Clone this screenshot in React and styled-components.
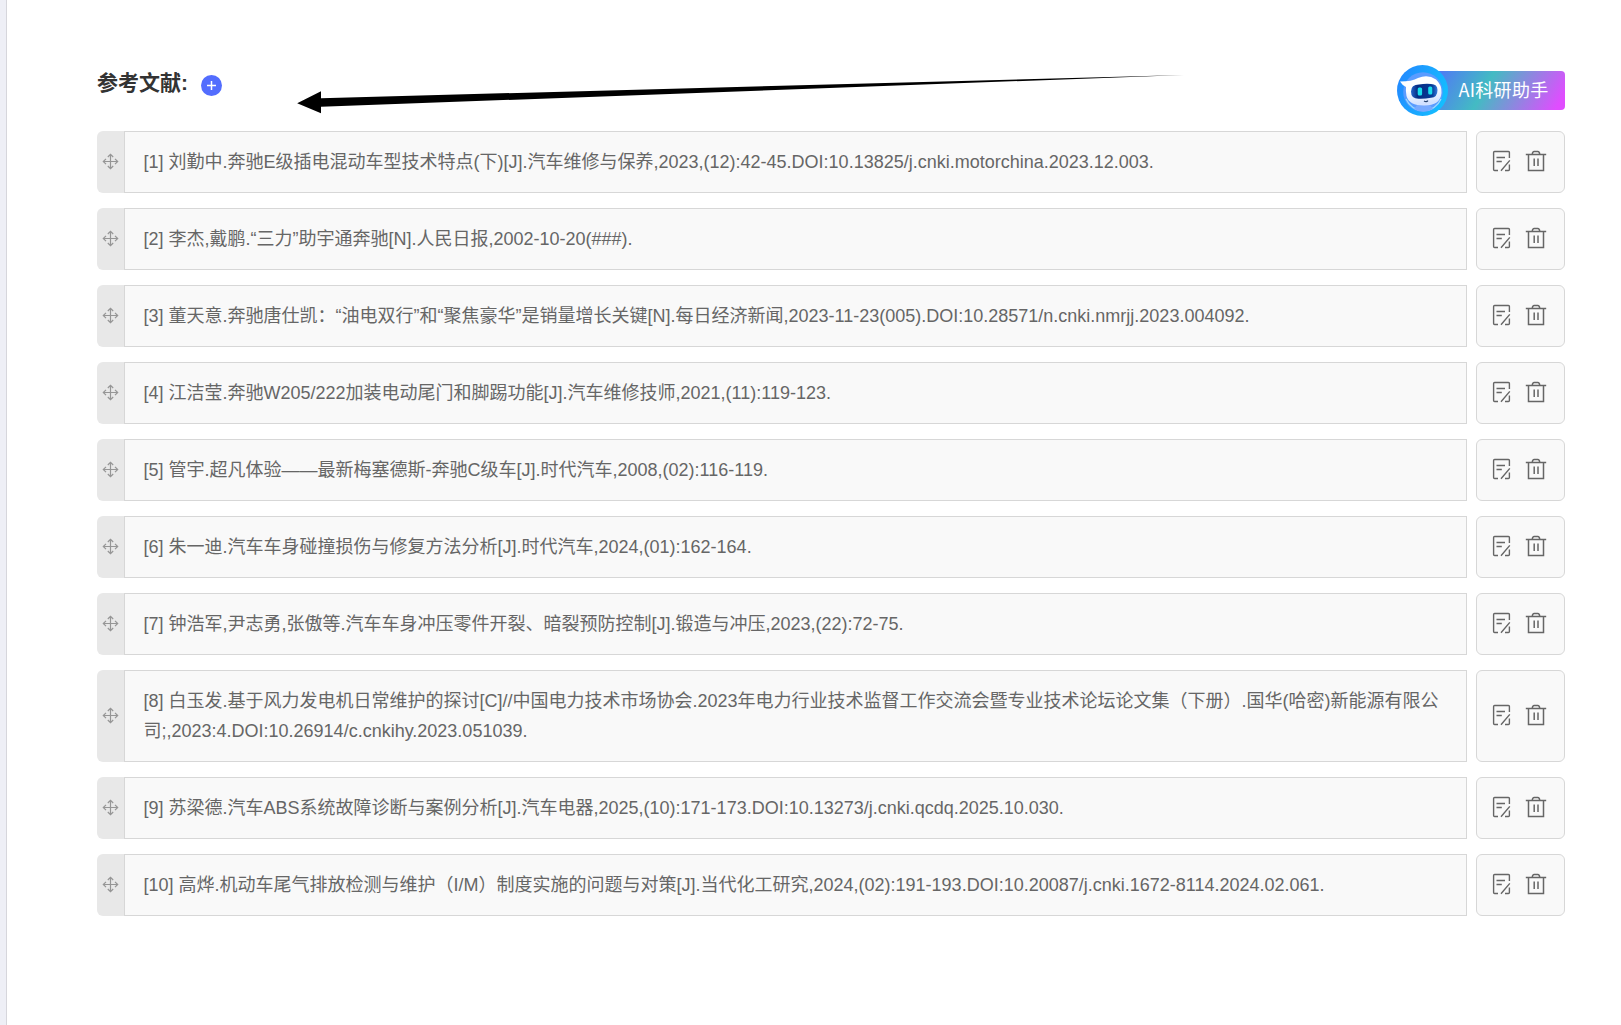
import React from 'react'
import styled, { createGlobalStyle } from 'styled-components'

const GlobalStyle = createGlobalStyle`
    * {
        box-sizing: border-box;
    }

    body {
        margin: 0;
        background: #FFFFFF;
        font-family: "Liberation Sans", "Noto Sans CJK SC", sans-serif;
    }
`

const Page = styled.div`
    position: relative;
    min-height: 1025px;
    display: flex;
`

const SideStrip = styled.div`
    width: 7px;
    flex-shrink: 0;
    background: #EEEFF6;
    border-right: 1px solid #D6D6DC;
`

const Content = styled.main`
    width: 1558px;
    padding: 65px 0px 0px 90px;
`

const HeaderRow = styled.div`
    height: 66px;
    display: flex;
    justify-content: space-between;
    align-items: flex-start;
`

const TitleContainer = styled.div`
    display: flex;
    align-items: center;
    padding: 3px 0px 0px 0px;

    & > h3 {
        margin: 0px;
        font-weight: bold;
        font-size: 21px;
        line-height: 30px;
        color: #333333;
    }
`

const AddButton = styled.button`
    width: 21px;
    height: 21px;
    margin: 5px 0px 0px 13px;
    padding: 0px;
    display: flex;
    justify-content: center;
    align-items: center;
    border: none;
    border-radius: 50%;
    background: #536DFE;
`

const AssistantButton = styled.div`
    display: flex;
    align-items: center;
    height: 51px;
`

const AssistantLabel = styled.div`
    width: 137px;
    height: 39px;
    margin: 0px 0px 0px -20px;
    padding: 0px 0px 0px 30.5px;
    border-radius: 0px 4px 4px 0px;
    background: linear-gradient(120deg, #536DFE 0%, #43BBC3 42%, #E04DFF 94%);
    font-family: "Noto Sans CJK SC", sans-serif;
    font-weight: 400;
    font-size: 18px;
    line-height: 37px;
    letter-spacing: 0.3px;
    white-space: nowrap;
    color: #FFFFFF;
`

const RobotSvg = styled.svg`
    position: relative;
    z-index: 1;
    display: block;
    width: 51px;
    height: 51px;
`

const ReferenceList = styled.div`
    display: flex;
    flex-direction: column;
    gap: 15px;
`

const ReferenceRow = styled.div`
    display: flex;
    align-items: stretch;
`

const DragHandle = styled.div`
    width: 27px;
    flex-shrink: 0;
    display: flex;
    justify-content: center;
    align-items: center;
    padding: 0px 0px 1px 0px;
    border-radius: 6px 0px 0px 6px;
    background: #E8E8E8;
`

const ReferenceText = styled.div`
    width: 1343px;
    padding: 15px 18px 15px 18.5px;
    border: 1px solid #D7D7D7;
    background: #F9F9F9;
    font-size: 18px;
    line-height: 30px;
    color: #666666;
`

const Actions = styled.div`
    width: 89px;
    margin: 0px 0px 0px 9px;
    display: flex;
    align-items: center;
    gap: 13px;
    padding: 0px 0px 2px 15px;
    border: 1px solid #D7D7D7;
    border-radius: 6px;
    background: #F9F9F9;
`

const Arrow = styled.svg`
    position: absolute;
    top: 70px;
    left: 290px;
`

const references = [
    '刘勤中.奔驰E级插电混动车型技术特点(下)[J].汽车维修与保养,2023,(12):42-45.DOI:10.13825/j.cnki.motorchina.2023.12.003.',
    '李杰,戴鹏.“三力”助宇通奔驰[N].人民日报,2002-10-20(###).',
    '董天意.奔驰唐仕凯：“油电双行”和“聚焦豪华”是销量增长关键[N].每日经济新闻,2023-11-23(005).DOI:10.28571/n.cnki.nmrjj.2023.004092.',
    '江洁莹.奔驰W205/222加装电动尾门和脚踢功能[J].汽车维修技师,2021,(11):119-123.',
    '管宇.超凡体验——最新梅塞德斯-奔驰C级车[J].时代汽车,2008,(02):116-119.',
    '朱一迪.汽车车身碰撞损伤与修复方法分析[J].时代汽车,2024,(01):162-164.',
    '钟浩军,尹志勇,张傲等.汽车车身冲压零件开裂、暗裂预防控制[J].锻造与冲压,2023,(22):72-75.',
    '白玉发.基于风力发电机日常维护的探讨[C]//中国电力技术市场协会.2023年电力行业技术监督工作交流会暨专业技术论坛论文集（下册）.国华(哈密)新能源有限公司;,2023:4.DOI:10.26914/c.cnkihy.2023.051039.',
    '苏梁德.汽车ABS系统故障诊断与案例分析[J].汽车电器,2025,(10):171-173.DOI:10.13273/j.cnki.qcdq.2025.10.030.',
    '高烨.机动车尾气排放检测与维护（I/M）制度实施的问题与对策[J].当代化工研究,2024,(02):191-193.DOI:10.20087/j.cnki.1672-8114.2024.02.061.',
]

function MoveIcon() {
    return (
        <svg width="17" height="17" viewBox="0 0 17 17" fill="none" stroke="#969696" strokeWidth="1.2">
            <path d="M8.5 1.5V15.5M1.5 8.5H15.5M5.8 4L8.5 1.3L11.2 4M5.8 13L8.5 15.7L11.2 13M4 5.8L1.3 8.5L4 11.2M13 5.8L15.7 8.5L13 11.2" />
        </svg>
    )
}

function EditIcon() {
    return (
        <svg width="20" height="22" viewBox="0 0 20 22" fill="none" stroke="#666666" strokeWidth="1.4">
            <path d="M17.4 8V2.5Q17.4 1.5 16.4 1.5H2.6Q1.6 1.5 1.6 2.5V19.5Q1.6 20.5 2.6 20.5H6" />
            <path d="M4.5 7.5H13M4.5 11.5H9.8M17.8 10.4L9 20.8M17.4 14.4V19.5Q17.4 20.5 16.4 20.5H13" />
        </svg>
    )
}

function TrashIcon() {
    return (
        <svg width="22" height="22" viewBox="0 0 22 22" fill="none" stroke="#666666" strokeWidth="1.5">
            <path d="M.8 4.5H21.2M3.5 4.5V20.5H18.5V4.5M7.2 4.5Q7.5 1.5 9.2 1.5H12.8Q14.5 1.5 14.8 4.5M9.2 8.5V16M13 8.5V16" />
        </svg>
    )
}

function Robot() {
    return (
        <RobotSvg viewBox="0 0 51 51">
            <defs>
                <linearGradient id="robotSky" x1="0" y1="0.2" x2="1" y2="0.6">
                    <stop offset="0" stopColor="#2388FF" />
                    <stop offset="1" stopColor="#13BFFF" />
                </linearGradient>
                <linearGradient id="robotHead" x1="0" y1="0" x2="0.2" y2="1">
                    <stop offset="0.5" stopColor="#FFFFFF" />
                    <stop offset="1" stopColor="#D2E1FF" />
                </linearGradient>
                <linearGradient id="robotFace" x1="0" y1="0" x2="1" y2="0">
                    <stop offset="0" stopColor="#2465C9" />
                    <stop offset="0.25" stopColor="#072C82" />
                    <stop offset="0.8" stopColor="#063B97" />
                    <stop offset="1" stopColor="#347BDE" />
                </linearGradient>
            </defs>
            <circle cx="25.5" cy="25.5" r="25.5" fill="url(#robotSky)" />
            <circle cx="26" cy="27" r="19.8" fill="#5B9CFF" />
            <path d="M9 34A19 19 0 0 0 44 34" fill="none" stroke="#9BDDFF" strokeWidth="1.2" />
            <path d="M20 40H33L36 44Q26 49 17 44Z" fill="#78AAFF" />
            <path d="M3 16.5Q15 16.5 21 13Q31 9 39 14.5Q45 20 44.5 28Q43.5 40.5 27 40.5Q12 40.5 9.5 31Q8.5 26 9 22Q5 20 3 16.5Z" fill="url(#robotHead)" />
            <path d="M22 19.5Q28 18.5 34 19Q40.5 19 40.5 25Q40.5 32.5 34 32.8Q28 34 22 33.8Q14 34 14 26.5Q14 19.5 22 19.5Z" fill="url(#robotFace)" />
            <rect x="20.7" y="22.4" width="4.4" height="8.2" rx="1.5" fill="#19DDED" />
            <rect x="31.2" y="21.6" width="4.1" height="7.8" rx="1.5" fill="#19DDED" />
            <path d="M27 36Q29.5 37.5 31 35.6" fill="none" stroke="#24416D" strokeWidth="1.1" />
        </RobotSvg>
    )
}

export default function App() {
    return (
        <Page>
            <GlobalStyle />
            <SideStrip />
            <Content>
                <HeaderRow>
                    <TitleContainer>
                        <h3>{'参考文献:'}</h3>
                        <AddButton aria-label="add">
                            <svg width="11" height="11" viewBox="0 0 11 11" stroke="#FFFFFF" strokeWidth="1.5">
                                <path d="M5.5 1V10M1 5.5H10" />
                            </svg>
                        </AddButton>
                    </TitleContainer>
                    <AssistantButton>
                        <Robot />
                        <AssistantLabel>{'AI科研助手'}</AssistantLabel>
                    </AssistantButton>
                </HeaderRow>
                <ReferenceList>
                    {references.map((text, index) => (
                        <ReferenceRow key={index}>
                            <DragHandle>
                                <MoveIcon />
                            </DragHandle>
                            <ReferenceText>{`[${index + 1}] ${text}`}</ReferenceText>
                            <Actions>
                                <EditIcon />
                                <TrashIcon />
                            </Actions>
                        </ReferenceRow>
                    ))}
                </ReferenceList>
            </Content>
            <Arrow width="900" height="50" viewBox="0 0 900 50">
                <path d="M7.2 33.3L31 21.3V28.2L894 5L31 36.8V43.3Z" fill="#000000" />
            </Arrow>
        </Page>
    )
}
